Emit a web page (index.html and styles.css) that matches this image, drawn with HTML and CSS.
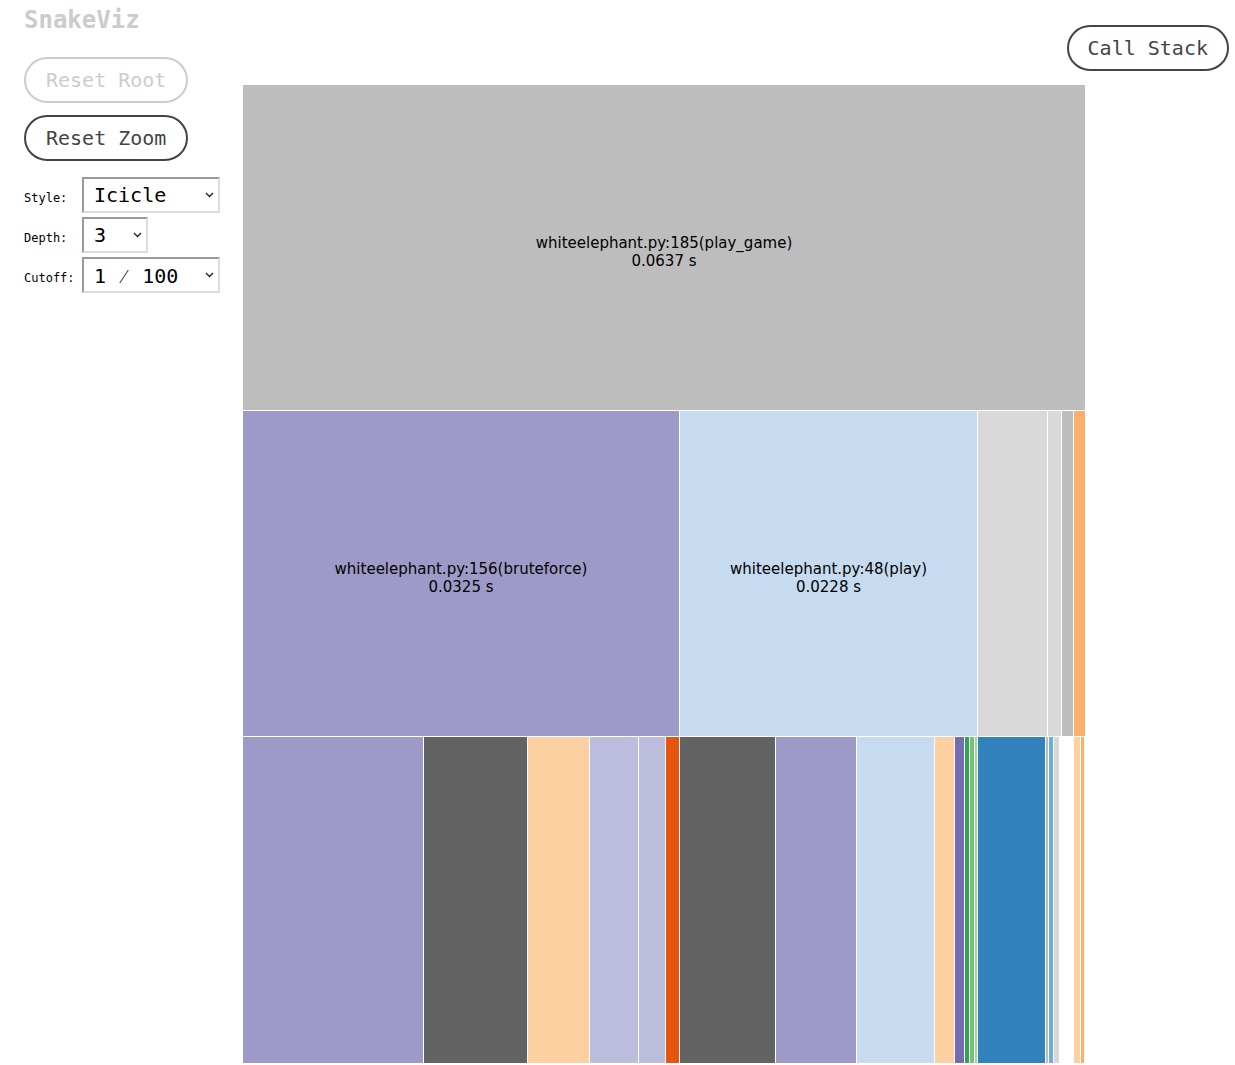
FILE: index.html
```html
<!DOCTYPE html>
<html>
<head>
<meta charset="utf-8">
<title>SnakeViz</title>
<link rel="stylesheet" href="styles.css">
</head>
<body>
<div class="page">
  <aside class="sidebar">
    <h1 class="title">SnakeViz</h1>
    <button class="btn btn-disabled">Reset Root</button>
    <button class="btn">Reset Zoom</button>
    <div class="options">
      <label class="opt-label">Style:</label>
      <div class="select select-wide"><span>Icicle</span><svg class="chev" width="9" height="6" viewBox="0 0 9 6"><path d="M1 1 L4.5 4.5 L8 1" fill="none" stroke="#222" stroke-width="1.4"/></svg></div>
      <label class="opt-label">Depth:</label>
      <div class="select select-narrow"><span>3</span><svg class="chev" width="9" height="6" viewBox="0 0 9 6"><path d="M1 1 L4.5 4.5 L8 1" fill="none" stroke="#222" stroke-width="1.4"/></svg></div>
      <label class="opt-label">Cutoff:</label>
      <div class="select select-wide"><span>1 <span class="frasl">&frasl;</span> 100</span><svg class="chev" width="9" height="6" viewBox="0 0 9 6"><path d="M1 1 L4.5 4.5 L8 1" fill="none" stroke="#222" stroke-width="1.4"/></svg></div>
    </div>
  </aside>
  <main class="main">
    <div class="topbar">
      <button class="btn">Call Stack</button>
    </div>
    <svg class="chart" width="844" height="980" viewBox="-0.5 -0.5 844 980">
      <g stroke="#fff" stroke-width="1">
        <rect x="0" y="0" width="843" height="326" fill="#bdbdbd"/>

        <rect x="0" y="326" width="437" height="326" fill="#9e9ac8"/>
        <rect x="437" y="326" width="298" height="326" fill="#c6dbef"/>
        <rect x="735" y="326" width="70" height="326" fill="#d9d9d9"/>
        <rect x="805" y="326" width="14" height="326" fill="#d9d9d9"/>
        <rect x="819" y="326" width="12" height="326" fill="#bdbdbd"/>
        <rect x="831" y="326" width="12" height="326" fill="#fdae6b"/>

        <rect x="0" y="652" width="181" height="327" fill="#9e9ac8"/>
        <rect x="181" y="652" width="104" height="327" fill="#636363"/>
        <rect x="285" y="652" width="62" height="327" fill="#fdd0a2"/>
        <rect x="347" y="652" width="49" height="327" fill="#bcbddc"/>
        <rect x="396" y="652" width="27" height="327" fill="#bcbddc"/>
        <rect x="423" y="652" width="14" height="327" fill="#e6550d"/>
        <rect x="437" y="652" width="96" height="327" fill="#636363"/>
        <rect x="533" y="652" width="81" height="327" fill="#9e9ac8"/>
        <rect x="614" y="652" width="78" height="327" fill="#c6dbef"/>
        <rect x="692" y="652" width="20" height="327" fill="#fdd0a2"/>
        <rect x="712" y="652" width="10" height="327" fill="#756bb1"/>
        <rect x="722" y="652" width="5" height="327" fill="#31a354"/>
        <rect x="727" y="652" width="5" height="327" fill="#74c476"/>
        <rect x="732" y="652" width="3" height="327" fill="#a1d99b"/>
        <rect x="735" y="652" width="68" height="327" fill="#3182bd"/>
        <rect x="803" y="652" width="3" height="327" fill="#bdbdbd"/>
        <rect x="806" y="652" width="5" height="327" fill="#6baed6"/>
        <rect x="811" y="652" width="6" height="327" fill="#d9d9d9"/>
        <rect x="831" y="652" width="7" height="327" fill="#fdd0a2"/>
        <rect x="838" y="652" width="4" height="327" fill="#fdae6b"/>
      </g>
      <g class="labels" text-anchor="middle">
        <text x="421.5" y="163">whiteelephant.py:185(play_game)</text>
        <text x="421.5" y="181">0.0637 s</text>
        <text x="218.5" y="489">whiteelephant.py:156(bruteforce)</text>
        <text x="218.5" y="507">0.0325 s</text>
        <text x="586" y="489">whiteelephant.py:48(play)</text>
        <text x="586" y="507">0.0228 s</text>
      </g>
    </svg>
  </main>
</div>
</body>
</html>
```
FILE: styles.css
```css
html, body {
  margin: 0;
  padding: 0;
  background: #fff;
}

.page {
  display: flex;
  align-items: flex-start;
}

.sidebar {
  width: 218px;
  box-sizing: border-box;
  padding: 6px 0 0 24px;
  display: flex;
  flex-direction: column;
  align-items: flex-start;
}

.title {
  margin: 0 0 23px 0;
  font-family: "DejaVu Sans Mono", monospace;
  font-weight: bold;
  font-size: 24px;
  line-height: 28px;
  color: #cccccc;
}

.btn {
  box-sizing: border-box;
  height: 46px;
  padding: 0 20px;
  border: 2px solid #444;
  border-radius: 23px;
  background: #fff;
  color: #444;
  font-family: "DejaVu Sans Mono", monospace;
  font-size: 20px;
  line-height: 24px;
  margin: 0 0 12px 0;
}

.btn-disabled {
  border-color: #cccccc;
  color: #cccccc;
}

.options {
  margin-top: 4px;
  display: grid;
  grid-template-columns: 58px auto;
  row-gap: 4px;
  align-items: center;
}

.opt-label {
  font-family: "DejaVu Sans Mono", monospace;
  font-size: 12px;
  color: #000;
  padding-top: 5px;
}

.select {
  box-sizing: border-box;
  height: 36px;
  display: flex;
  align-items: center;
  justify-content: space-between;
  padding: 0 4px 0 10px;
  border: 2px solid;
  border-color: #9a9a9a #dcdcdc #dcdcdc #9a9a9a;
  font-family: "DejaVu Sans Mono", monospace;
  font-size: 20px;
  color: #000;
  background: #fff;
}

.frasl {
  font-family: "Noto Sans CJK JP", monospace;
  font-size: 18px;
  display: inline-block;
  width: 12px;
  text-align: center;
}

.select-wide {
  width: 138px;
}

.select-narrow {
  width: 66px;
}

.chev {
  display: block;
}

.main {
  flex: 1;
  display: flex;
  flex-direction: column;
  align-items: flex-start;
  padding-left: 24px;
}

.topbar {
  align-self: stretch;
  display: flex;
  justify-content: flex-end;
  align-items: flex-start;
  padding: 25px 6px 0 0;
  height: 84px;
  box-sizing: border-box;
}

.topbar .btn {
  margin: 0;
  padding: 0 19px;
}

.chart {
  display: block;
}

.labels text {
  font-family: "DejaVu Sans", sans-serif;
  font-size: 15px;
  fill: #000;
}
```
